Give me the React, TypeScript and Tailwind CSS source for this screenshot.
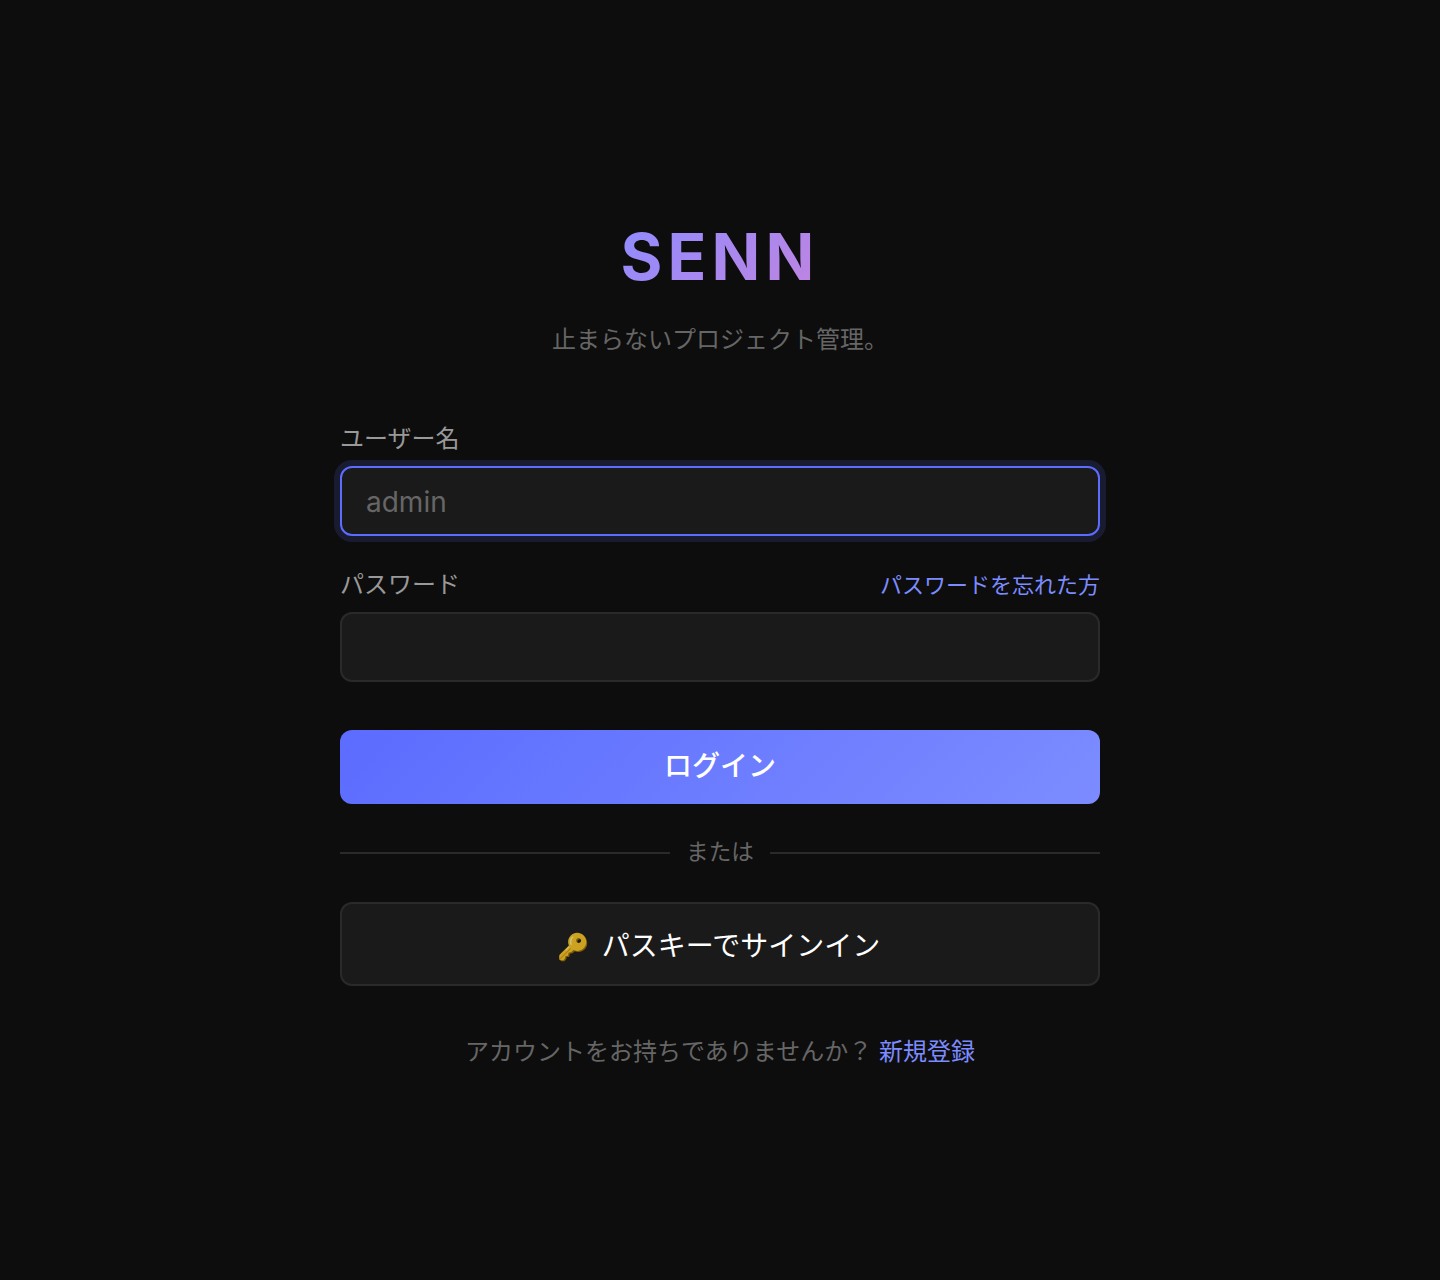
const FONT = "font-['Inter','Noto_Sans_CJK_JP',sans-serif]";

export default function App() {
  return (
    <main className={`${FONT} min-h-screen bg-[#0d0d0d] pt-[218px]`}>
      <div className="mx-auto w-[760px]">
        <div className="text-center">
          <h1 className="inline-block bg-[linear-gradient(135deg,#8f8cff,#c084e0)] bg-clip-text text-[64px] leading-[77px] font-bold tracking-[0.08em] text-transparent">
            SENN
          </h1>
          <p className="mt-[25px] text-[24px] leading-[40px] text-[#666666]">止まらないプロジェクト管理。</p>
        </div>

        <form className="mt-[61px]">
          <label className="block text-[24px] leading-[36px] text-[#999999]">ユーザー名</label>
          <div className="mt-[9px] flex h-[70px] items-center rounded-[12px] border-2 border-[#5b6cff] bg-[#1a1a1a] px-[24px] pt-[2px] text-[28px] text-[#666666] shadow-[0_0_0_6px_rgba(91,108,255,0.15)]">
            admin
          </div>

          <div className="mt-[31px] flex items-center justify-between">
            <label className="text-[24px] leading-[36px] text-[#999999]">パスワード</label>
            <a className="text-[22px] leading-[36px] text-[#7c8cff]">パスワードを忘れた方</a>
          </div>
          <div className="mt-[9px] h-[70px] rounded-[12px] border-2 border-[#2a2a2a] bg-[#1a1a1a]" />

          <button type="button" className="mt-[48px] h-[74px] w-full rounded-[12px] bg-[linear-gradient(135deg,#5b6cff,#7c8cff)] pb-[3px] text-[28px] font-medium text-white">
            ログイン
          </button>

          <div className="mt-[32px] flex items-center gap-[16px]">
            <div className="mt-[2px] h-[2px] flex-1 bg-[#2a2a2a]" />
            <span className="text-[22.6px] leading-[32px] text-[#666666]">または</span>
            <div className="mt-[2px] h-[2px] flex-1 bg-[#2a2a2a]" />
          </div>

          <button type="button" className="mt-[34px] flex h-[84px] w-full items-center justify-center gap-[13px] rounded-[12px] border-2 border-[#2a2a2a] bg-[#1a1a1a] pt-[4px] pr-[3px] text-[28px] text-white">
            <span className="text-[26px] brightness-[0.8]">🔑</span>
            <span>パスキーでサインイン</span>
          </button>
        </form>

        <p className="mt-[46px] text-center text-[24px] leading-[40px] text-[#666666]">
          アカウントをお持ちでありませんか？ <a className="text-[#7c8cff]">新規登録</a>
        </p>
      </div>
    </main>
  );
}
